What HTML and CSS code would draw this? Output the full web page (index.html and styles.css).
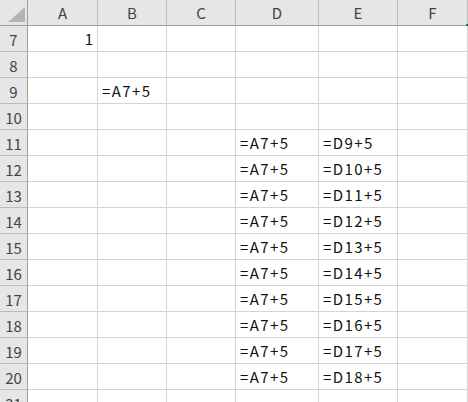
FILE: index.html
```html
<!DOCTYPE html>
<html lang="ja">
<head>
  <meta charset="UTF-8">
  <title>Sheet1</title>
  <link rel="stylesheet" href="styles.css">
</head>
<body>
  <!-- Hoja de cálculo -->
  <div class="sheet">
    <div class="corner"><span class="corner-tri"></span></div>
    <div class="col-head">A</div>
    <div class="col-head">B</div>
    <div class="col-head">C</div>
    <div class="col-head">D</div>
    <div class="col-head">E</div>
    <div class="col-head last">F</div>

    <div class="row-head">7</div>
    <div class="cell num">1</div><div class="cell"></div><div class="cell"></div><div class="cell"></div><div class="cell"></div><div class="cell"></div>

    <div class="row-head">8</div>
    <div class="cell"></div><div class="cell"></div><div class="cell"></div><div class="cell"></div><div class="cell"></div><div class="cell"></div>

    <div class="row-head">9</div>
    <div class="cell"></div><div class="cell text">=A7+5</div><div class="cell"></div><div class="cell"></div><div class="cell"></div><div class="cell"></div>

    <div class="row-head">10</div>
    <div class="cell"></div><div class="cell"></div><div class="cell"></div><div class="cell"></div><div class="cell"></div><div class="cell"></div>

    <div class="row-head">11</div>
    <div class="cell"></div><div class="cell"></div><div class="cell"></div><div class="cell text">=A7+5</div><div class="cell text">=D9+5</div><div class="cell"></div>

    <div class="row-head">12</div>
    <div class="cell"></div><div class="cell"></div><div class="cell"></div><div class="cell text">=A7+5</div><div class="cell text">=D10+5</div><div class="cell"></div>

    <div class="row-head">13</div>
    <div class="cell"></div><div class="cell"></div><div class="cell"></div><div class="cell text">=A7+5</div><div class="cell text">=D11+5</div><div class="cell"></div>

    <div class="row-head">14</div>
    <div class="cell"></div><div class="cell"></div><div class="cell"></div><div class="cell text">=A7+5</div><div class="cell text">=D12+5</div><div class="cell"></div>

    <div class="row-head">15</div>
    <div class="cell"></div><div class="cell"></div><div class="cell"></div><div class="cell text">=A7+5</div><div class="cell text">=D13+5</div><div class="cell"></div>

    <div class="row-head">16</div>
    <div class="cell"></div><div class="cell"></div><div class="cell"></div><div class="cell text">=A7+5</div><div class="cell text">=D14+5</div><div class="cell"></div>

    <div class="row-head">17</div>
    <div class="cell"></div><div class="cell"></div><div class="cell"></div><div class="cell text">=A7+5</div><div class="cell text">=D15+5</div><div class="cell"></div>

    <div class="row-head">18</div>
    <div class="cell"></div><div class="cell"></div><div class="cell"></div><div class="cell text">=A7+5</div><div class="cell text">=D16+5</div><div class="cell"></div>

    <div class="row-head">19</div>
    <div class="cell"></div><div class="cell"></div><div class="cell"></div><div class="cell text">=A7+5</div><div class="cell text">=D17+5</div><div class="cell"></div>

    <div class="row-head">20</div>
    <div class="cell"></div><div class="cell"></div><div class="cell"></div><div class="cell text">=A7+5</div><div class="cell text">=D18+5</div><div class="cell"></div>

    <div class="row-head">21</div>
    <div class="cell"></div><div class="cell"></div><div class="cell"></div><div class="cell"></div><div class="cell"></div><div class="cell"></div>
  </div>
</body>
</html>
```

FILE: styles.css
```css
/* RESET BÁSICO */
* {
  margin: 0;
  padding: 0;
  box-sizing: border-box;
}

html, body {
  height: 100%;
  overflow: hidden;
}

body {
  background-color: #ffffff;
  font-family: "Noto Sans CJK JP", "Noto Sans", sans-serif;
  font-size: 15px;
  color: #111;
}

/* ────────────────────────────────── */
/* REJILLA DE LA HOJA */
.sheet {
  display: grid;
  grid-template-columns: 28px 70px 69px 69px 83px 79px 70px;
  grid-auto-rows: 26px;
  width: 468px;
}

.cell {
  border-right: 1px solid #d4d4d4;
  border-bottom: 1px solid #d4d4d4;
  display: flex;
  align-items: center;
  padding: 0 4px 0 4px;
  white-space: nowrap;
  overflow: hidden;
}
.cell.text {
  letter-spacing: 1.4px;
}
.cell.num {
  justify-content: flex-end;
}

/* Cabeceras */
.col-head,
.row-head,
.corner {
  background-color: #e6e6e6;
  color: #444;
  display: flex;
  align-items: center;
  justify-content: center;
}
.col-head {
  border-right: 1px solid #bcbcbc;
  border-bottom: 1px solid #9e9e9e;
}
.col-head.last {
  position: relative;
}
/* Marca verde de la celda activa */
.col-head.last::after {
  content: '';
  position: absolute;
  right: -1px;
  bottom: -1px;
  width: 2px;
  height: 2px;
  background-color: #217346;
}
.row-head {
  border-right: 1px solid #9e9e9e;
  border-bottom: 1px solid #bcbcbc;
  padding-top: 1px;
}
.corner {
  border-right: 1px solid #9e9e9e;
  border-bottom: 1px solid #9e9e9e;
  position: relative;
}
.corner-tri {
  position: absolute;
  right: 2px;
  bottom: 3px;
  width: 0;
  height: 0;
  border-left: 17px solid transparent;
  border-bottom: 15px solid #b4b4b4;
}
```
